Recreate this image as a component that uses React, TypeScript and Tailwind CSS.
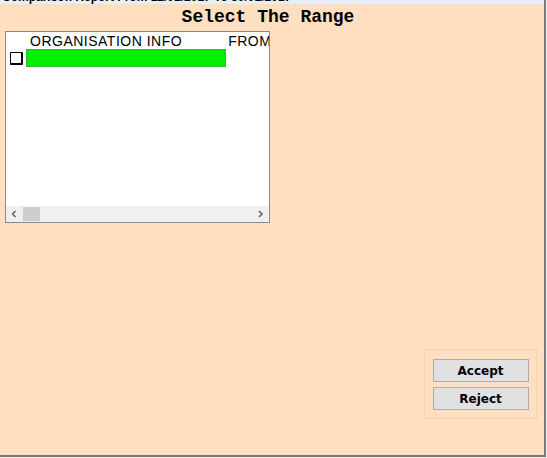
import React from "react";

export default function App() {
  return (
    <div className="w-[547px] h-[458px] bg-[#f4f4f4] overflow-hidden" style={{ fontFamily: '"Liberation Sans", Arial, sans-serif' }}>
      <div className="w-[546px] h-[457px] bg-[#ffdfc0] border-r-2 border-b-2 border-[#7a7a7a] flex flex-col relative">
        <div className="h-[4px] bg-[#e6eef7] overflow-hidden shrink-0">
          <div className="text-[12px] leading-[14px] font-bold text-black mt-[-10px] pl-[2px] whitespace-nowrap">
            Comparison Report From 12/01/2017 To 30/01/2017
          </div>
        </div>
        <div className="h-[25px] flex items-center justify-center shrink-0 pt-[2px]">
          <span className="text-[18px] font-bold text-black pr-[8px]" style={{ fontFamily: '"Liberation Mono", "Courier New", monospace' }}>
            Select The Range
          </span>
        </div>
        <div className="flex-1 flex flex-col">
          <div className="ml-[5px] mt-[2px] w-[265px] h-[192px] bg-white border border-[#8a8a8a] flex flex-col overflow-hidden">
            <div className="flex-1 relative">
              <div className="h-[16px] flex items-end text-[14px] leading-[14px] tracking-[0.5px] text-black whitespace-nowrap">
                <span className="ml-[24px]">ORGANISATION INFO</span>
                <span className="ml-[46px]">FROM</span>
              </div>
              <div className="flex items-center mt-[1px]">
                <div className="ml-[4px] w-[13px] h-[13px] border border-black border-r-2 border-b-2 bg-white rounded-[1px]" />
                <div className="ml-[3px] w-[200px] h-[18px] bg-[#00f000] border border-[#40b040]" />
              </div>
            </div>
            <div className="h-[16px] bg-[#f0f0f0] flex items-center shrink-0">
              <svg width="17" height="16" viewBox="0 0 17 16" className="shrink-0">
                <path d="M9.5 5 L6.5 8 L9.5 11" fill="none" stroke="#606060" strokeWidth="1.5" />
              </svg>
              <div className="w-[17px] h-[14px] bg-[#cdcdcd]" />
              <div className="flex-1" />
              <svg width="17" height="16" viewBox="0 0 17 16" className="shrink-0">
                <path d="M7 5 L10 8 L7 11" fill="none" stroke="#606060" strokeWidth="1.5" />
              </svg>
            </div>
          </div>
          <div className="flex-1" />
          <div className="flex justify-end pr-[7px] mb-[30px]">
            <div className="w-[113px] h-[70px] border border-[#f4d2b0] flex flex-col items-center gap-[5px] pt-[9px]">
              <button className="w-[96px] h-[23px] bg-[#e1e1e1] border border-[#adadad] text-[12px] font-bold text-black" style={{ fontFamily: '"DejaVu Sans", Verdana, sans-serif' }}>
                Accept
              </button>
              <button className="w-[96px] h-[23px] bg-[#e1e1e1] border border-[#adadad] text-[12px] font-bold text-black" style={{ fontFamily: '"DejaVu Sans", Verdana, sans-serif' }}>
                Reject
              </button>
            </div>
          </div>
          <div className="h-[1px] bg-[#ffe8d4] mb-[5px]" />
        </div>
      </div>
    </div>
  );
}
